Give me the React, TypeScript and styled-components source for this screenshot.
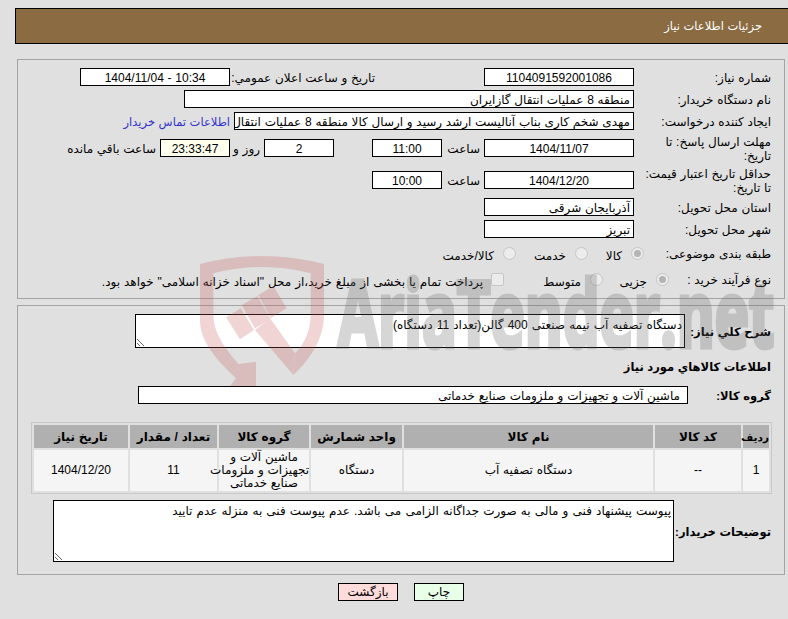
import React from 'react';
import styled, { createGlobalStyle } from 'styled-components';

const columns = [
  { title: 'ردیف', width: 26, value: '1' },
  { title: 'کد کالا', width: 86, value: '--' },
  { title: 'نام کالا', width: 249, value: 'دستگاه تصفیه آب' },
  { title: 'واحد شمارش', width: 91, value: 'دستگاه' },
  {
    title: 'گروه کالا',
    width: 90,
    value: (
      <>
        ماشین آلات و
        <br />
        تجهیزات و ملزومات
        <br />
        صنایع خدماتی
      </>
    ),
  },
  { title: 'تعداد / مقدار', width: 87, value: '11' },
  { title: 'تاریخ نیاز', width: 94, value: '1404/12/20' },
];

export default function App() {
  return (
    <Page>
      <GlobalStyle />
      <Header>جزئیات اطلاعات نیاز</Header>

      <Panel>
        <Row>
          <Label $width={137}>شماره نیاز:</Label>
          <Box $width={150} $center>1104091592001086</Box>
          <Caption $width={149} $offset={105}>تاریخ و ساعت اعلان عمومي:</Caption>
          <Box $width={150} $center>10:34 - 1404/11/04</Box>
        </Row>
        <Row>
          <Label $width={137}>نام دستگاه خریدار:</Label>
          <Box $width={450}>منطقه 8 عملیات انتقال گازایران</Box>
        </Row>
        <Row>
          <Label $width={137}>ایجاد کننده درخواست:</Label>
          <Box $width={400}>مهدی شخم کاری بناب آنالیست ارشد رسید و ارسال کالا منطقه 8 عملیات انتقال گاز ایران</Box>
          <ContactLink>اطلاعات تماس خریدار</ContactLink>
        </Row>
        <Row $height={28}>
          <Label $width={137}>
            مهلت ارسال پاسخ: تا
            <br />
            تاریخ:
          </Label>
          <Box $width={150} $center>1404/11/07</Box>
          <Caption $width={42}>ساعت</Caption>
          <Box $width={70} $center>11:00</Box>
          <Box $width={70} $center $offset={38}>2</Box>
          <Caption $width={34}>روز و</Caption>
          <Box $width={70} $center $bg="#ffffee">23:33:47</Box>
          <Caption>ساعت باقي مانده</Caption>
        </Row>
        <Row $height={28}>
          <Label $width={137}>
            حداقل تاریخ اعتبار قیمت:
            <br />
            تا تاریخ:
          </Label>
          <Box $width={150} $center>1404/12/20</Box>
          <Caption $width={42}>ساعت</Caption>
          <Box $width={70} $center>10:00</Box>
        </Row>
        <Row>
          <Label $width={137}>استان محل تحویل:</Label>
          <Box $width={150}>آذربایجان شرقی</Box>
        </Row>
        <Row>
          <Label $width={137}>شهر محل تحویل:</Label>
          <Box $width={150}>تبریز</Box>
        </Row>
        <Row $height={22}>
          <Label $width={127}>طبقه بندی موضوعی:</Label>
          <Radio $checked />
          <Option $width={34}>کالا</Option>
          <Radio />
          <Option $width={50}>خدمت</Option>
          <Radio />
          <Option>کالا/خدمت</Option>
        </Row>
        <Row $height={22}>
          <Label $width={102}>نوع فرآیند خرید :</Label>
          <Radio $checked />
          <Option $width={44}>جزیی</Option>
          <Radio />
          <Option $width={77}>متوسط</Option>
          <Check />
          <Option>پرداخت تمام یا بخشی از مبلغ خرید،از محل "اسناد خزانه اسلامی" خواهد بود.</Option>
        </Row>
      </Panel>

      <Panel $second>
        <Row $height={34}>
          <Label $width={86} $bold>شرح كلي نياز:</Label>
          <Note $width={550} $height={34} readOnly defaultValue="دستگاه تصفیه آب نیمه صنعتی 400 گالن(تعداد 11 دستگاه)" />
        </Row>
        <SectionTitle>اطلاعات كالاهاي مورد نياز</SectionTitle>
        <Row>
          <Label $width={83} $bold>گروه کالا:</Label>
          <Box $width={550} $inset={7}>ماشین آلات و تجهیزات و ملزومات صنایع خدماتی</Box>
        </Row>
        <Items>
          <colgroup>
            {columns.map((c) => (
              <col key={c.title} style={{ width: c.width }} />
            ))}
          </colgroup>
          <thead>
            <tr>
              {columns.map((c) => (
                <HeadCell key={c.title}>{c.title}</HeadCell>
              ))}
            </tr>
          </thead>
          <tbody>
            <tr>
              {columns.map((c) => (
                <Cell key={c.title}>{c.value}</Cell>
              ))}
            </tr>
          </tbody>
        </Items>
        <Row $height={62}>
          <Label $width={97} $bold>توضیحات خریدار:</Label>
          <Note
            $width={621}
            $height={62}
            readOnly
            defaultValue="پیوست پیشنهاد فنی و مالی به صورت جداگانه الزامی می باشد. عدم پیوست فنی به منزله عدم تایید"
          />
        </Row>
      </Panel>

      <Footer>
        <Action $width={50} $bg="#e8ffe8">چاپ</Action>
        <Action $width={60} $bg="#ffdcdc">بازگشت</Action>
      </Footer>

      <Shield viewBox="0 0 600 438" aria-hidden="true">
        <g fill="#c85858" opacity="0.25">
          <path d="M60 72 Q246 24 432 72 L432 225 C432 290 395 355 340 405 L345 340 C375 310 392 270 392 225 L392 100 Q246 62 100 100 L100 225 C100 275 130 320 175 372 L228 365 L228 438 L150 438 L168 415 C100 350 60 300 60 240 Z" />
          <polygon points="270,235 345,340 340,405 225,270" />
          <polygon points="138,232 182,205 222,270 180,298" />
          <polygon points="185,195 232,168 272,238 225,265" />
          <polygon points="235,165 280,138 320,205 272,235" />
        </g>
      </Shield>
      <Brand>AriaTender.net</Brand>
    </Page>
  );
}

const GlobalStyle = createGlobalStyle`
  html, body {
    margin: 0;
    padding: 0;
    background: #e0e0e0;
    overflow: hidden;
  }
`;

const Page = styled.div`
  position: relative;
  width: 788px;
  height: 619px;
  overflow: hidden;
  padding-top: 8px;
  box-sizing: border-box;
  direction: rtl;
  font-family: 'Liberation Sans', 'DejaVu Sans', sans-serif;
  font-size: 12px;
  word-spacing: 0.4px;
  color: #000;
`;

const Header = styled.div`
  box-sizing: border-box;
  height: 36px;
  margin-left: 15px;
  padding-right: 26px;
  display: flex;
  align-items: center;
  background: #8b6b42;
  border: 1px solid #000;
  border-right: none;
  font-size: 11.5px;
  color: #fff;
`;

const Panel = styled.div<{ $second?: boolean }>`
  box-sizing: border-box;
  width: 768px;
  margin-right: 3px;
  margin-top: ${(p) => (p.$second ? '6px' : '15px')};
  padding: 8px 13px ${(p) => (p.$second ? '12px' : '8px')} 0;
  display: flex;
  flex-direction: column;
  gap: ${(p) => (p.$second ? '0' : '4px')};
  border: 1px solid #a3a3a3;
`;

const Row = styled.div<{ $height?: number }>`
  display: flex;
  align-items: center;
  height: ${(p) => p.$height ?? 18}px;
`;

const Label = styled.div<{ $width: number; $bold?: boolean }>`
  flex: none;
  width: ${(p) => p.$width}px;
  padding-top: 2px;
  font-weight: ${(p) => (p.$bold ? 700 : 400)};
  font-size: ${(p) => (p.$bold ? '11.5px' : '12px')};
  white-space: nowrap;
  line-height: 14px;
`;

const Box = styled.div<{ $width: number; $center?: boolean; $bg?: string; $offset?: number; $inset?: number }>`
  flex: none;
  box-sizing: border-box;
  width: ${(p) => p.$width}px;
  height: 18px;
  margin-right: ${(p) => p.$offset ?? 0}px;
  padding: 0 ${(p) => p.$inset ?? 3}px;
  background: ${(p) => p.$bg ?? '#fff'};
  border: 1px solid #000;
  line-height: 18px;
  text-align: ${(p) => (p.$center ? 'center' : 'right')};
  white-space: nowrap;
  overflow: hidden;
`;

const Caption = styled.div<{ $width?: number; $offset?: number }>`
  flex: none;
  box-sizing: border-box;
  width: ${(p) => (p.$width ? `${p.$width}px` : 'auto')};
  margin-right: ${(p) => p.$offset ?? 0}px;
  padding: 2px 4px 0 0;
  white-space: nowrap;
`;

const ContactLink = styled.a`
  margin-right: 4px;
  padding-top: 2px;
  font-size: 11.5px;
  color: #3333cc;
  white-space: nowrap;
`;

const Radio = styled.span<{ $checked?: boolean }>`
  flex: none;
  box-sizing: border-box;
  width: 13px;
  height: 13px;
  margin-left: 9px;
  display: flex;
  align-items: center;
  justify-content: center;
  border: 1px solid #c6c6c6;
  border-radius: 50%;
  background: #ececec;

  &::after {
    content: '';
    display: ${(p) => (p.$checked ? 'block' : 'none')};
    width: 7px;
    height: 7px;
    border-radius: 50%;
    background: #b4b4b4;
  }
`;

const Check = styled.span`
  flex: none;
  box-sizing: border-box;
  width: 13px;
  height: 13px;
  margin-left: 8px;
  border: 1px solid #c6c6c6;
  border-radius: 2px;
  background: #ececec;
`;

const Option = styled.span<{ $width?: number }>`
  flex: none;
  width: ${(p) => (p.$width ? `${p.$width}px` : 'auto')};
  padding-top: 5px;
  word-spacing: 0.6px;
  white-space: nowrap;
`;

const Note = styled.textarea<{ $width: number; $height: number }>`
  flex: none;
  box-sizing: border-box;
  width: ${(p) => p.$width}px;
  height: ${(p) => p.$height}px;
  margin: 0;
  padding: 3px 2px;
  background: #fff;
  border: 1px solid #000;
  border-radius: 0;
  outline: none;
  font-family: inherit;
  font-size: 12px;
  word-spacing: 0.8px;
  color: #000;
`;

const SectionTitle = styled.div`
  height: 38px;
  display: flex;
  align-items: center;
  font-weight: 700;
  font-size: 11.5px;
`;

const Items = styled.table`
  width: 741px;
  margin: 18px -1px 6px 0;
  table-layout: fixed;
  border: 1px solid #c8c8c8;
  border-spacing: 2px;
  font-size: 12px;
`;

const HeadCell = styled.th`
  height: 23px;
  padding: 0;
  background: #b0b0b0;
  font-weight: 700;
  text-align: center;

  &:first-child {
    font-size: 10.5px;
  }
`;

const Cell = styled.td`
  height: 41px;
  padding: 0;
  background: #f5f5f5;
  line-height: 13px;
  white-space: nowrap;
  text-align: center;
`;

const Footer = styled.div`
  width: 768px;
  margin: 8px 3px 0 0;
  display: flex;
  justify-content: center;
  gap: 16px;
`;

const Action = styled.div<{ $width: number; $bg: string }>`
  box-sizing: border-box;
  width: ${(p) => p.$width}px;
  height: 18px;
  background: ${(p) => p.$bg};
  border: 1px solid #000;
  line-height: 16px;
  text-align: center;
`;

const Shield = styled.svg`
  position: absolute;
  left: 180px;
  top: 240px;
  width: 200px;
  height: 146px;
  pointer-events: none;
`;

const Brand = styled.div`
  position: absolute;
  left: 338px;
  top: 252px;
  direction: ltr;
  font-family: 'Open Sans', 'Liberation Sans', sans-serif;
  font-size: 92px;
  font-weight: 700;
  line-height: 120px;
  white-space: nowrap;
  color: #666;
  opacity: 0.26;
  -webkit-text-stroke: 5px #666;
  transform: scaleX(0.63);
  transform-origin: left center;
  pointer-events: none;
`;
